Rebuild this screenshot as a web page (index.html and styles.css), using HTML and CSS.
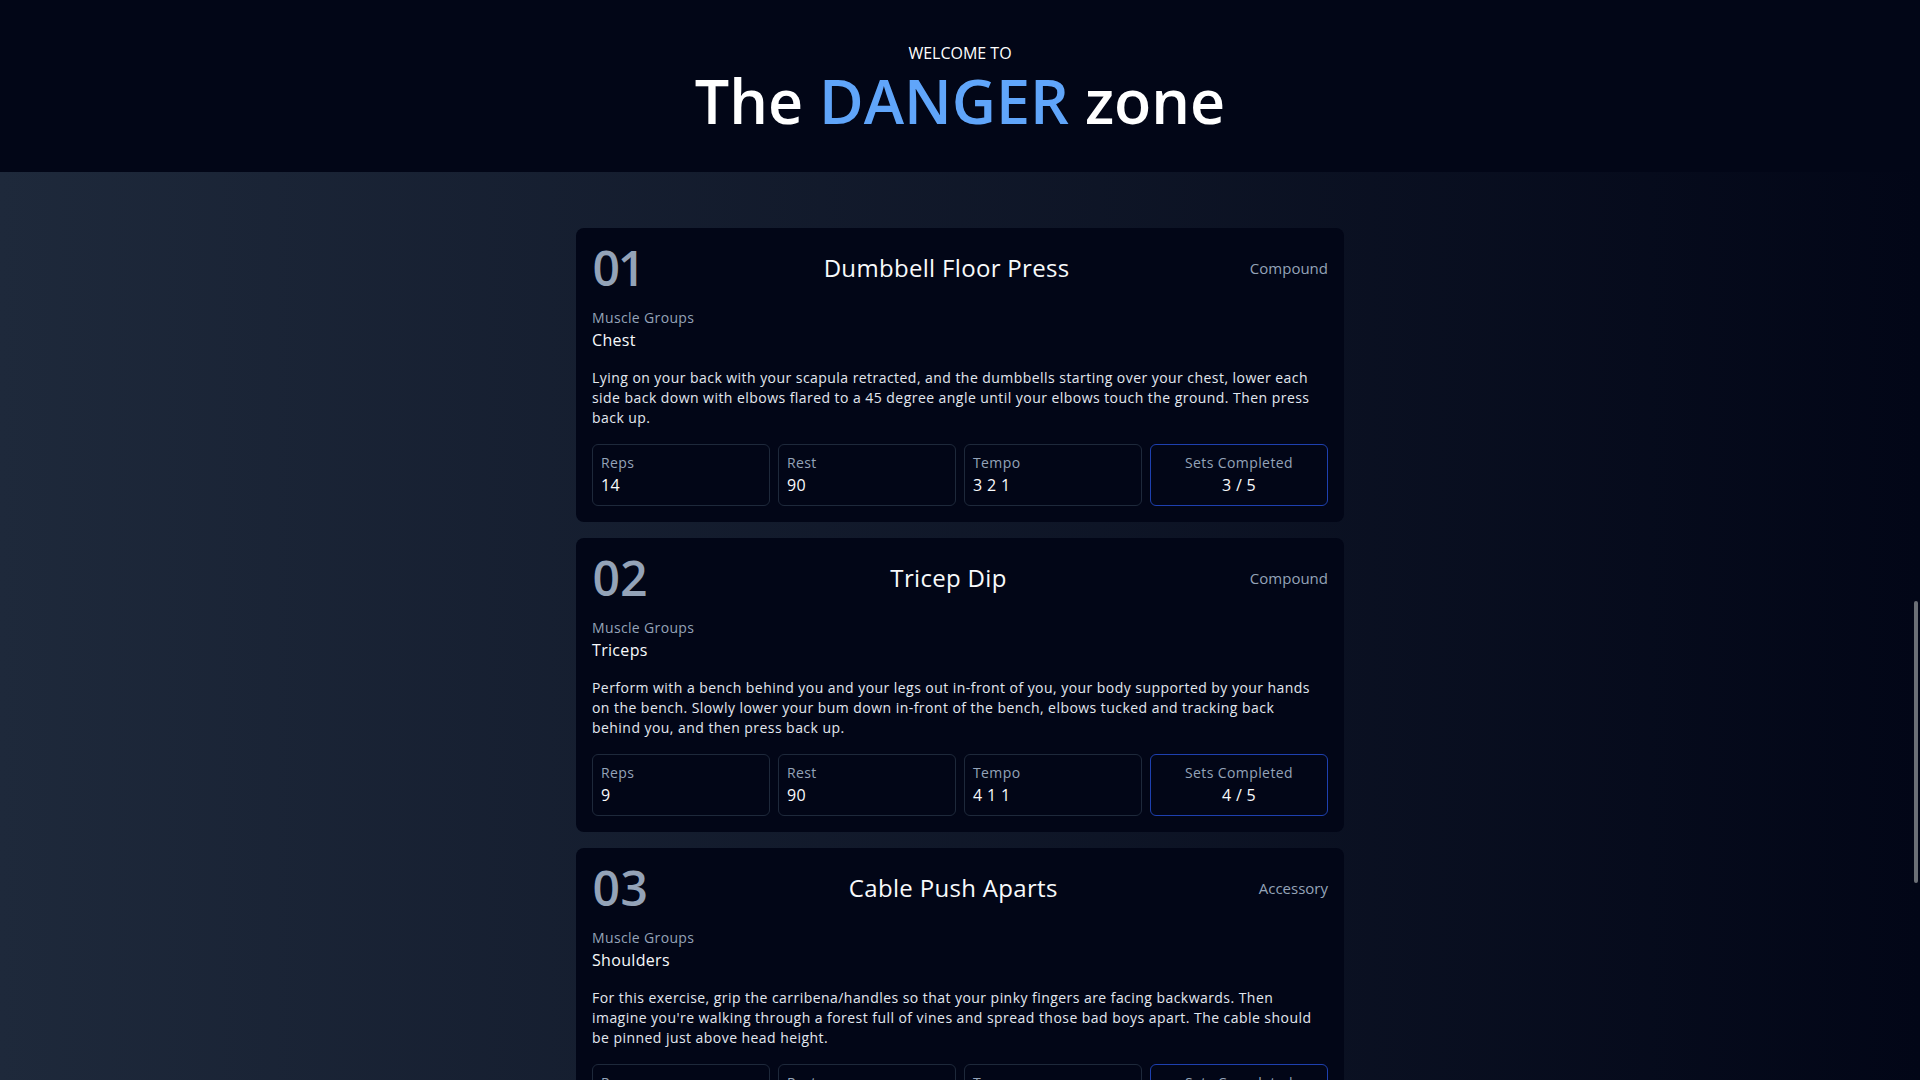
FILE: index.html
```html
<!DOCTYPE html>
<html lang="en">
<head>
<meta charset="utf-8">
<title>The DANGER zone</title>
<link rel="stylesheet" href="styles.css">
</head>
<body>
<header class="hero">
  <p class="hero-kicker">WELCOME TO</p>
  <h1 class="hero-title">The <span class="accent">DANGER</span> zone</h1>
</header>
<main class="workout">
  <article class="exercise-card">
    <div class="card-head">
      <span class="card-index">01</span>
      <h2 class="card-title">Dumbbell Floor Press</h2>
      <span class="card-type">Compound</span>
    </div>
    <div class="muscles">
      <p class="label">Muscle Groups</p>
      <p class="muscle-name">Chest</p>
    </div>
    <p class="card-desc">Lying on your back with your scapula retracted, and the dumbbells starting over your chest, lower each side&nbsp;back down with elbows flared to a 45 degree angle until your elbows touch the ground. Then press back&nbsp;up.</p>
    <div class="stats">
      <div class="stat"><span class="stat-label">Reps</span><span class="stat-value">14</span></div>
      <div class="stat"><span class="stat-label">Rest</span><span class="stat-value">90</span></div>
      <div class="stat"><span class="stat-label">Tempo</span><span class="stat-value">3 2 1</span></div>
      <div class="stat stat-sets"><span class="stat-label">Sets Completed</span><span class="stat-value">3 / 5</span></div>
    </div>
  </article>
  <article class="exercise-card">
    <div class="card-head">
      <span class="card-index">02</span>
      <h2 class="card-title">Tricep Dip</h2>
      <span class="card-type">Compound</span>
    </div>
    <div class="muscles">
      <p class="label">Muscle Groups</p>
      <p class="muscle-name">Triceps</p>
    </div>
    <p class="card-desc">Perform with a bench behind you and your legs out in-front of you, your body supported by your hands on&nbsp;the bench. Slowly lower your bum down in-front of the bench, elbows tucked and tracking back behind&nbsp;you, and then press back up.</p>
    <div class="stats">
      <div class="stat"><span class="stat-label">Reps</span><span class="stat-value">9</span></div>
      <div class="stat"><span class="stat-label">Rest</span><span class="stat-value">90</span></div>
      <div class="stat"><span class="stat-label">Tempo</span><span class="stat-value">4 1 1</span></div>
      <div class="stat stat-sets"><span class="stat-label">Sets Completed</span><span class="stat-value">4 / 5</span></div>
    </div>
  </article>
  <article class="exercise-card">
    <div class="card-head">
      <span class="card-index">03</span>
      <h2 class="card-title">Cable Push Aparts</h2>
      <span class="card-type">Accessory</span>
    </div>
    <div class="muscles">
      <p class="label">Muscle Groups</p>
      <p class="muscle-name">Shoulders</p>
    </div>
    <p class="card-desc">For this exercise, grip the carribena/handles so that your pinky fingers are facing backwards. Then imagine&nbsp;you're walking through a forest full of vines and spread those bad boys apart. The cable should be&nbsp;pinned just above head height.</p>
    <div class="stats">
      <div class="stat"><span class="stat-label">Reps</span><span class="stat-value">12</span></div>
      <div class="stat"><span class="stat-label">Rest</span><span class="stat-value">60</span></div>
      <div class="stat"><span class="stat-label">Tempo</span><span class="stat-value">2 1 1</span></div>
      <div class="stat stat-sets"><span class="stat-label">Sets Completed</span><span class="stat-value">0 / 3</span></div>
    </div>
  </article>
</main>
<div class="scroll-thumb" aria-hidden="true"></div>
</body>
</html>
```

FILE: styles.css
```css
* {
  box-sizing: border-box;
  margin: 0;
  padding: 0;
}

html {
  scrollbar-width: none;
}

html::-webkit-scrollbar {
  display: none;
}

body {
  font-family: "Open Sans", "Liberation Sans", sans-serif;
  background: linear-gradient(to right, #1e293b, #020617);
  color: #f1f5f9;
  min-height: 100vh;
  letter-spacing: 0.02em;
}

.hero {
  background: #020617;
  padding: 41px 0 41px;
  text-align: center;
}

.hero-kicker {
  font-size: 16px;
  line-height: 24px;
  font-weight: 500;
  color: #ffffff;
  letter-spacing: 0;
}

.hero-title {
  margin-top: 5px;
  font-size: 61px;
  line-height: 61px;
  font-weight: 600;
  color: #ffffff;
  letter-spacing: 0;
}

.accent {
  color: #60a5fa;
}

.workout {
  width: 768px;
  margin: 0 auto;
  padding: 56px 0;
  display: flex;
  flex-direction: column;
  gap: 16px;
}

.exercise-card {
  background: #020617;
  border-radius: 8px;
  padding: 16px;
  display: flex;
  flex-direction: column;
  gap: 16px;
}

.card-head {
  display: flex;
  justify-content: space-between;
  align-items: center;
  height: 48px;
}

.card-index {
  font-size: 48px;
  line-height: 48px;
  font-weight: 600;
  color: #94a3b8;
  letter-spacing: 0;
  font-variant-numeric: proportional-nums;
}

.card-title {
  font-size: 24px;
  line-height: 32px;
  font-weight: 400;
  color: #f8fafc;
}

.card-type {
  font-size: 15px;
  line-height: 24px;
  color: #94a3b8;
  letter-spacing: 0;
}

.label {
  font-size: 14px;
  line-height: 20px;
  color: #94a3b8;
  letter-spacing: 0.35px;
}

.muscle-name {
  font-size: 16px;
  line-height: 24px;
  color: #f8fafc;
}

.card-desc {
  font-size: 14px;
  line-height: 20px;
  color: #e2e8f0;
  letter-spacing: 0.45px;
}

.stats {
  display: grid;
  grid-template-columns: repeat(4, 1fr);
  gap: 8px;
}

.stat {
  display: flex;
  flex-direction: column;
  border: 1px solid #1e293b;
  border-radius: 6px;
  padding: 8px;
}

.stat-sets {
  border-color: #1e40af;
  align-items: center;
  text-align: center;
}

.stat-label {
  font-size: 14px;
  line-height: 20px;
  color: #94a3b8;
  letter-spacing: 0.4px;
}

.stat-value {
  font-size: 16px;
  line-height: 24px;
  font-weight: 500;
  color: #f8fafc;
}

.scroll-thumb {
  position: fixed;
  top: 601px;
  right: 2px;
  width: 4px;
  height: 282px;
  border-radius: 2px;
  background: #6b6f76;
}
```
